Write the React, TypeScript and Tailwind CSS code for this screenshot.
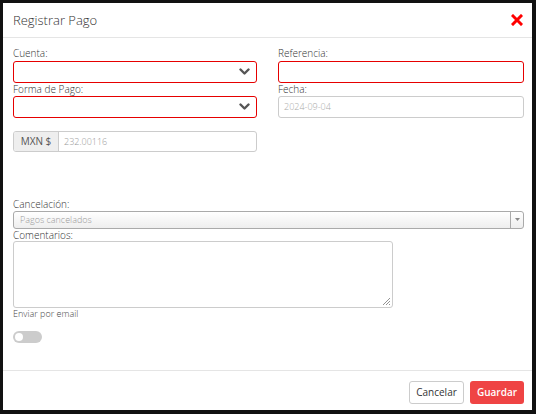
import React from "react";

const Chevron = () => (
  <svg width="11" height="8" viewBox="0 0 11 8" className="shrink-0">
    <path d="M1.5 1.5 L5.5 5.5 L9.5 1.5" fill="none" stroke="#555" strokeWidth="2.4" strokeLinecap="round" strokeLinejoin="round" />
  </svg>
);

export default function App() {
  return (
    <div className="w-[536px] h-[414px] bg-[#111] pt-[3px] pl-[3px]" style={{ fontFamily: '"Open Sans", sans-serif' }}>
      <div className="w-[529px] h-[407px] bg-white flex flex-col">
        {/* Header */}
        <div className="h-[35px] border-b border-[#e5e5e5] flex items-center justify-between pl-[10px] pr-[9px]">
          <span className="text-[13px] font-light text-[#333] leading-none">Registrar Pago</span>
          <svg width="12" height="12" viewBox="0 0 12 12">
            <path d="M2 2 L10 10 M10 2 L2 10" stroke="#f00" strokeWidth="3" strokeLinecap="square" />
          </svg>
        </div>
        {/* Body */}
        <div className="flex-1 pl-[10px] pr-[8px] pt-[9px] text-[#333] font-light">
          <div className="grid grid-cols-[244px_246px] gap-x-[21px]">
            <div className="flex flex-col">
              <label className="text-[10px] leading-[13px] h-[14px]">Cuenta:</label>
              <div className="h-[22px] border border-[#e60000] rounded-[3px] flex items-center justify-end pr-[6px]">
                <Chevron />
              </div>
              <label className="text-[10px] leading-[13px] h-[13px]">Forma de Pago:</label>
              <div className="h-[22px] border border-[#e60000] rounded-[3px] flex items-center justify-end pr-[6px]">
                <Chevron />
              </div>
            </div>
            <div className="flex flex-col">
              <label className="text-[10px] leading-[13px] h-[14px]">Referencia:</label>
              <div className="h-[22px] border border-[#e60000] rounded-[3px]" />
              <label className="text-[10px] leading-[13px] h-[13px]">Fecha:</label>
              <div className="h-[22px] border border-[#ccc] rounded-[3px] flex items-center pl-[5px] text-[9px] text-[#aaa]">
                2024-09-04
              </div>
            </div>
          </div>
          {/* MXN */}
          <div className="mt-[13px] w-[244px] h-[21px] flex border border-[#ccc] rounded-[3px] overflow-hidden">
            <div className="w-[45px] bg-[#eee] border-r border-[#ccc] flex items-center justify-center text-[10px] text-[#555] font-normal">MXN $</div>
            <div className="flex items-center pl-[5px] text-[9px] text-[#999]">232.00116</div>
          </div>
          {/* Cancelacion */}
          <label className="block mt-[46px] text-[10px] leading-[13px] h-[13px]">Cancelación:</label>
          <div className="h-[18px] w-[511px] border border-[#aaa] rounded-[3px] bg-gradient-to-b from-white to-[#eee] flex items-center justify-between">
            <span className="pl-[6px] text-[9px] text-[#999]">Pagos cancelados</span>
            <div className="h-full w-[13px] border-l border-[#aaa] flex items-center justify-center">
              <svg width="5" height="4" viewBox="0 0 5 4"><path d="M0 0 L5 0 L2.5 3 Z" fill="#888" /></svg>
            </div>
          </div>
          <label className="block text-[10px] leading-[12px] h-[12px]">Comentarios:</label>
          <div className="relative h-[67px] w-[380px] border border-[#ccc] rounded-[3px]">
            <svg className="absolute right-[1px] bottom-[1px]" width="9" height="9" viewBox="0 0 9 9">
              <path d="M8 1 L1 8 M8 4 L4 8 M8 7 L7 8" stroke="#777" strokeWidth="0.8" />
            </svg>
          </div>
          <div className="text-[9px] leading-[12px] text-[#444]">Enviar por email</div>
          <div className="mt-[11px] w-[29px] h-[12px] rounded-full bg-[#ccc] flex items-center pl-[2px]">
            <div className="w-[8px] h-[8px] rounded-full bg-white" />
          </div>
        </div>
        {/* Footer */}
        <div className="h-[40px] border-t border-[#e5e5e5] flex items-start justify-end gap-[6px] pt-[10px] pr-[8px]">
          <button className="h-[23px] w-[55px] border border-[#ccc] rounded-[3px] text-[10px] text-[#333] bg-white">Cancelar</button>
          <button className="h-[23px] w-[54px] rounded-[3px] text-[10px] text-white bg-[#ef4444] font-semibold">Guardar</button>
        </div>
      </div>
    </div>
  );
}
